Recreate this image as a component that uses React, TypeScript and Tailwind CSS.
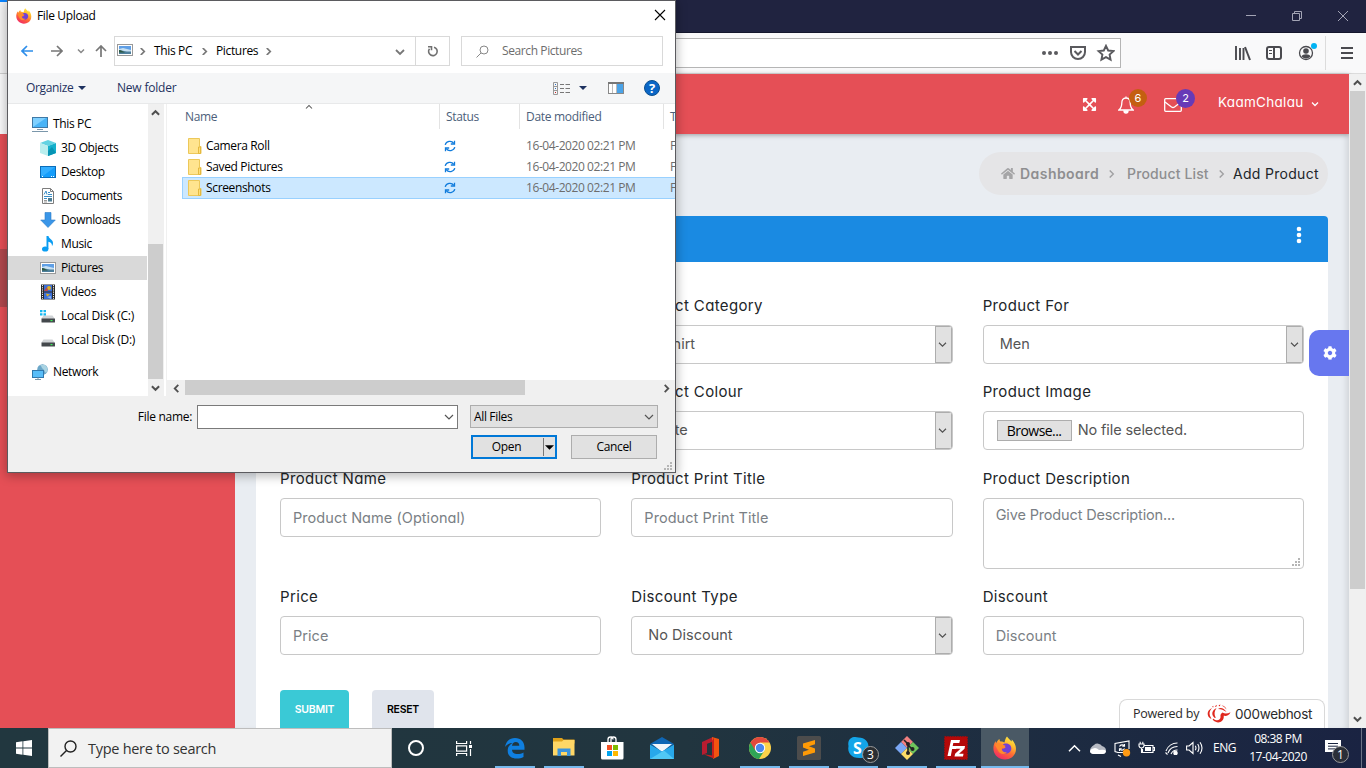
import React from "react";
import { FaHome, FaCog, FaExpandArrowsAlt } from "react-icons/fa";

const SEG = "font-['Open_Sans','Noto_Sans',sans-serif]";

type IconProps = { className?: string };

function Firefox({ className }: IconProps) {
  return (
    <svg viewBox="0 0 24 24" className={className}>
      <defs>
        <linearGradient id="ffx" x1="0.8" y1="0" x2="0.25" y2="1">
          <stop offset="0" stopColor="#fff04a" />
          <stop offset="0.3" stopColor="#ffbd2e" />
          <stop offset="0.6" stopColor="#ff6a34" />
          <stop offset="1" stopColor="#f0246a" />
        </linearGradient>
      </defs>
      <path d="M14 0.5c1 2 3.200 3 4.500 5 .3-.7.300-1.200.2-2 3.500 3.500 5 8 4 12-1.200 5-5.700 8-10.700 8-6 0-10.700-4-11.500-9.500-.4-3.500.300-6 2-9 .1 1 .3 1.500.7 2C4 5.500 5 4 6.500 3c0 1.300.300 2 1 2.500 2 0 3 .5 4 1C12 4 12.500 2 14 .5z" fill="url(#ffx)" />
      <path d="M12 7.500c4-.5 6.500 2 6.300 5.200-.2 3-2.800 5-5.600 4.800-3-.2-5.200-2.400-5-5 2 .6 3.500.2 5-1.200-1.600-.4-2.800-.8-3.500-1.600.7-1 1.500-1.900 2.800-2.200z" fill="#7140d6" />
      <path d="M2 9c2-2 5-2.500 7-.5l3.500 1.200c0 1-1.500 1.700-3.500 2-.8 3 2 5.300 5 4.300-2 3-7.500 2.500-9-1.500z" fill="#ff8a2b" />
    </svg>
  );
}

function Picture({ className = "h-3 w-4" }: IconProps) {
  return (
    <svg viewBox="0 0 16 12" className={className}>
      <rect x="0.5" y="0.5" width="15" height="11" fill="#fff" stroke="#999" />
      <rect x="2" y="2" width="12" height="8" fill="#5f9fe6" />
      <path d="M2 5l4-1 8 2v2H2z" fill="#c7e0f2" />
      <path d="M2 6c3 0 5 2 12 1.500V10H2z" fill="#4d7f9c" />
      <path d="M2 6c2 0 3 1 6 2.500H2z" fill="#2d5942" />
    </svg>
  );
}

function Folder() {
  return (
    <svg viewBox="0 0 14 16" className="h-4 w-3.5 shrink-0">
      <path d="M.5.5h11v8h1.500v7H.5z" fill="#ffe48f" stroke="#ecc85a" />
      <path d="M10.500 9h2v6.500h-2z" fill="#ffdf7a" stroke="#e5b93f" />
    </svg>
  );
}

function Sync() {
  return (
    <svg viewBox="0 0 12 12" className="h-3 w-3" fill="none" stroke="#0f7bdc" strokeWidth="1.3">
      <path d="M1.200 4.800A4.800 4.500 0 0 1 9.800 3.300M10.800 7.200A4.800 4.500 0 0 1 2.200 8.700" />
      <path d="M10.500.7v3.300H6.800M1.500 11.300V8H5.200" />
    </svg>
  );
}

function Chev({ d, className = "h-2 w-2.5", stroke = "#505050", sw = 1.8 }: { d: "up" | "down" | "left" | "right"; className?: string; stroke?: string; sw?: number }) {
  const p = { up: "M1 6l4-4 4 4", down: "M1 2l4 4 4-4", left: "M7 0L3 4l4 4", right: "M3 0l4 4-4 4" }[d];
  return (
    <svg viewBox="0 0 10 8" className={className} fill="none" stroke={stroke} strokeWidth={sw}>
      <path d={p} />
    </svg>
  );
}

function TreeIcon({ name }: { name: string }) {
  const c = "h-4 w-4 shrink-0";
  switch (name) {
    case "This PC":
      return (
        <svg viewBox="0 0 16 16" className={c}>
          <rect x=".5" y="1.500" width="15" height="10" fill="#49b4f7" stroke="#3f79a6" />
          <path d="M1 11L14 2H1z" fill="#7fd0ff" />
          <path d="M5 13.500h6M0 15.500h16" stroke="#7b97ab" />
        </svg>
      );
    case "3D Objects":
      return (
        <svg viewBox="0 0 16 16" className={c}>
          <path d="M0 3l8-3 8 3-8 3z" fill="#63d3e2" />
          <path d="M0 3l8 3v10l-8-3z" fill="#b9eeee" />
          <path d="M16 3L8 6v10l8-3z" fill="#15b0cb" />
          <path d="M8 11l4-4 4 6-8 3z" fill="#0794b4" />
        </svg>
      );
    case "Desktop":
      return (
        <svg viewBox="0 0 16 16" className={c}>
          <rect x=".5" y="2.500" width="15" height="11" fill="#149dfb" stroke="#0b6db9" />
          <path d="M1 3h14L3 12H1z" fill="#33aeff" />
          <path d="M2 12.500h1M11 12.500h1M13 12.500h1" stroke="#fff" />
        </svg>
      );
    case "Documents":
      return (
        <svg viewBox="0 0 16 16" className={c}>
          <path d="M2.500.5h8l3 3v12h-11z" fill="#fff" stroke="#7d7d7d" />
          <path d="M10.500.5v3h3" fill="none" stroke="#7d7d7d" />
          <path d="M4 6.500L6 3l1 3.500M8 4.500h2M8 6.500h4M4 8.500h8M4 10.500h3" stroke="#3a8fc8" fill="none" />
          <path d="M4 12.500h3M4 14h3" stroke="#999" fill="none" />
          <rect x="8" y="10" width="4" height="3.500" fill="#4b7c93" />
        </svg>
      );
    case "Downloads":
      return (
        <svg viewBox="0 0 16 16" className={c}>
          <path d="M5 .5h6V8h4.300L8 15.500.7 8H5z" fill="#3a96e8" stroke="#2c7cc8" strokeWidth=".6" />
        </svg>
      );
    case "Music":
      return (
        <svg viewBox="0 0 16 16" className={c}>
          <ellipse cx="5.200" cy="13" rx="3.200" ry="2.600" fill="#0a9df2" />
          <path d="M6.500 0h2c.2 3 4.500 3.500 4.500 7 0 1.500-.5 2.500-1 3 .2-3-1.500-4-3.600-4.300V13H6.500z" fill="#0a9df2" />
        </svg>
      );
    case "Pictures":
      return <Picture className="h-3 w-4 shrink-0" />;
    case "Videos":
      return (
        <svg viewBox="0 0 16 16" className={c}>
          <rect x="1" y=".5" width="14" height="15" fill="#2a2a2a" />
          <path d="M2.500 1v14M13.500 1v14" stroke="#eee" strokeDasharray="1.200 1" />
          <rect x="4" y="1" width="8" height="6.500" fill="#3c6fd6" />
          <rect x="4" y="8.500" width="8" height="6.500" fill="#3c6fd6" />
          <circle cx="9" cy="4" r="2" fill="#e0b020" />
          <path d="M4 7l3-4 1 4z" fill="#c04a4a" />
          <path d="M6 9.500l4 1-3 2z" fill="#e0b020" />
          <path d="M7 13l4-1v3z" fill="#88b2f0" />
        </svg>
      );
    case "Local Disk (C:)":
    case "Local Disk (D:)":
      return (
        <svg viewBox="0 0 16 16" className={c}>
          <path d="M3.500 7.500h9L15 11H1z" fill="#d0d3d6" />
          {name.includes("C:") && <path d="M0 2h2.500v2.300H0zM3.500 2H6v2.300H3.500zM0 5.300h2.500v2.300H0zM3.500 5.300H6v2.300H3.500z" fill="#14b8f2" />}
          <rect x="1.500" y="10.500" width="13.500" height="4" rx=".5" fill="#44484c" />
          <rect x="10.500" y="12" width="2" height="1.200" fill="#3df05a" />
        </svg>
      );
    default:
      return (
        <svg viewBox="0 0 16 16" className={c}>
          <circle cx="10.500" cy="5.500" r="5.300" fill="#6aa6c8" />
          <path d="M8 1c2 1 1 3 3 4s1 3 3 4c2-2 2-6-1-8z" fill="#a9d3e2" />
          <rect x=".5" y="6.500" width="11" height="7" fill="#58bdf8" stroke="#2f78ad" />
          <path d="M3 15.500h6M6 13.500v2" stroke="#7b97ab" />
        </svg>
      );
  }
}

const tree = ["This PC", "3D Objects", "Desktop", "Documents", "Downloads", "Music", "Pictures", "Videos", "Local Disk (C:)", "Local Disk (D:)"];

function Tree() {
  return (
    <div className="flex w-[140px] flex-col pt-2">
      {tree.map((t, i) => (
        <div
          key={t}
          className={`flex h-6 w-[139px] items-center whitespace-nowrap ${t === "Pictures" ? "bg-[#d9d9d9]" : ""} ${i === 0 ? "gap-[5px] pl-6" : "gap-[5px] pl-8"}`}
        >
          <TreeIcon name={t} />
          <span className={t.startsWith("Local") ? "tracking-[-0.25px]" : ""}>{t}</span>
        </div>
      ))}
      <div className="mt-2 flex h-6 items-center gap-[5px] pl-6">
        <TreeIcon name="Network" />
        <span>Network</span>
      </div>
    </div>
  );
}

function FileRow({ name, selected }: { name: string; selected?: boolean }) {
  return (
    <div className={`ml-[15px] flex items-center border whitespace-nowrap ${selected ? "h-[22px] border-[#99d1ff] bg-[#cce8ff]" : "h-[21px] border-transparent"} border-r-0`}>
      <div className="flex w-[261px] shrink-0 items-center gap-1 pl-[5px]">
        <Folder />
        <span>{name}</span>
      </div>
      <div className="w-[82px] shrink-0">
        <Sync />
      </div>
      <div className="w-[144px] shrink-0 tracking-[-0.42px] text-[#6d6d6d]">16-04-2020 02:21 PM</div>
      <div className="text-[#6d6d6d]">File folder</div>
    </div>
  );
}

function Grip({ className }: IconProps) {
  return (
    <svg viewBox="0 0 8 8" className={className} fill="#b5b5b5">
      <path d="M6 0h2v2H6zM3 3h2v2H3zM6 3h2v2H6zM0 6h2v2H0zM3 6h2v2H3zM6 6h2v2H6z" />
    </svg>
  );
}

function FileDialog() {
  return (
    <div className={`absolute top-0 left-[7px] flex h-[473px] w-[669px] flex-col overflow-hidden border border-[#5b5b5f] bg-white text-[12px] leading-4 tracking-[-0.35px] text-black ${SEG}`}>
      <div className="flex h-[30px] shrink-0 items-center pr-[9px] pl-2">
        <Firefox className="h-4 w-4" />
        <span className="ml-[5px] flex-1">File Upload</span>
        <svg viewBox="0 0 12 12" className="mb-[2px] h-3 w-3" stroke="#000" strokeWidth="1.1">
          <path d="M1 1l10 10M11 1L1 11" />
        </svg>
      </div>
      <div className="flex h-[42px] shrink-0 items-center pb-[2px] pl-[13px]">
        <svg viewBox="0 0 12 12" className="h-3 w-3" fill="none" stroke="#2e8eea" strokeWidth="1.7">
          <path d="M12 6H1M6 1L1 6l5 5" />
        </svg>
        <svg viewBox="0 0 12 12" className="ml-[18px] h-3 w-3" fill="none" stroke="#777" strokeWidth="1.700">
          <path d="M0 6h11M6 1l5 5-5 5" />
        </svg>
        <Chev d="down" className="ml-[14px] h-[6px] w-[8px]" stroke="#888" sw={2} />
        <svg viewBox="0 0 12 12" className="ml-[10px] mr-px h-3 w-3" fill="none" stroke="#777" strokeWidth="1.700">
          <path d="M6 12V1M1 6l5-5 5 5" />
        </svg>
        <div className="ml-[6px] flex h-[30px] w-[336px] items-center border border-[#d9d9d9]">
          <Picture className="mb-[2px] ml-[2px] h-3 w-4" />
          <Chev d="right" className="ml-[5px] h-[7px] w-[9px]" stroke="#777" sw={2} />
          <span className="ml-[7px] w-[40px]">This PC</span>
          <Chev d="right" className="ml-[6px] h-[7px] w-[9px]" stroke="#777" sw={2} />
          <span className="ml-[7px] w-[43px]">Pictures</span>
          <Chev d="right" className="ml-[5px] h-[7px] w-[9px]" stroke="#777" sw={2} />
          <Chev d="down" className="mt-px ml-auto h-2 w-2.5" stroke="#777" />
          <div className="ml-[10px] flex h-full w-[34px] items-center justify-center border-l border-[#d9d9d9]">
            <svg viewBox="0 0 12 12" className="h-3 w-3" fill="none" stroke="#707070" strokeWidth="1.600">
              <path d="M7 2.200a4.300 4.300 0 1 1-4.500 1.500M1 1.800h3.500v3.500" />
            </svg>
          </div>
        </div>
        <div className="ml-[11px] flex h-[30px] w-[202px] items-center border border-[#d9d9d9] text-[#6d6d6d]">
          <svg viewBox="0 0 13 13" className="ml-[14px] h-[13px] w-[13px]" fill="none" stroke="#888">
            <circle cx="8" cy="5" r="4" />
            <path d="M5 8L.5 12.500" />
          </svg>
          <span className="ml-[13px] tracking-[-0.400px]">Search Pictures</span>
        </div>
      </div>
      <div className="flex h-[31px] shrink-0 items-center border-b border-[#e8e9ea] bg-[#f5f6f7] pl-[18px] text-[#1e3260]">
        <span className="w-[52px]">Organize</span>
        <svg viewBox="0 0 8 4" className="h-1 w-2"><path d="M0 0h8L4 4z" fill="#1e3260" /></svg>
        <span className="ml-[31px] tracking-[-0.2px]">New folder</span>
        <svg viewBox="0 0 17 13" className="ml-auto h-[13px] w-[17px]" fill="none" stroke="#777">
          <path d="M.5.5h4v12h-4zM.5 4.500h4M.5 8.500h4" stroke="#999" />
          <path d="M7 2.500h4M12.500 2.500H17M7 6.500h4M12.500 6.500H17M7 10.500h4M12.500 10.500H17" />
          <path d="M2 10.500h1" stroke="#d02020" /><path d="M2 6.500h1M2 2.500h1" stroke="#3070c0" />
        </svg>
        <svg viewBox="0 0 8 4" className="ml-[9px] h-1 w-2"><path d="M0 0h8L4 4z" fill="#1e3260" /></svg>
        <svg viewBox="0 0 16 12" className="ml-[21px] h-3 w-4">
          <rect x=".5" y=".5" width="15" height="11" fill="#fff" stroke="#888" />
          <path d="M0 1h16" stroke="#777" strokeWidth="2" />
          <path d="M4.500 2v9M8.500 2v9" stroke="#bbb" />
          <rect x="9" y="2" width="6" height="9" fill="#4aa3e8" />
        </svg>
        <span className="mr-[15px] ml-5 flex h-4 w-4 items-center justify-center rounded-full border border-[#0a4f8f] bg-[#0a66c6] text-[13px] font-bold text-white">?</span>
      </div>
      <div className="flex h-[292px] shrink-0">
        <Tree />
        <div className="flex w-4 flex-col items-center bg-[#f0f0f0]">
          <Chev d="up" className="mt-[5px] mr-px h-2 w-[9px]" sw={2.2} />
          <div className="mt-[127px] h-[135px] w-[15px] self-start bg-[#cdcdcd]" />
          <Chev d="down" className="mt-[5px] mr-px h-2 w-[9px]" sw={2.2} />
        </div>
        <div className="ml-[2px] flex w-[509px] flex-col border-l border-[#f0f0f0]">
          <div className="relative flex h-[25px] shrink-0 text-[#4c607a] [&>div]:shrink-0 [&>div]:pt-[5px]">
            <Chev d="up" className="absolute top-0 left-[137px] h-[6px] w-[10px]" stroke="#555" sw={1.4} />
            <div className="w-[273px] border-r border-[#e3e3e3] pl-[18px]">Name</div>
            <div className="w-[80px] border-r border-[#e3e3e3] pl-[6px]">Status</div>
            <div className="w-[144px] border-r border-[#e3e3e3] pl-[6px] tracking-[-0.3px]">Date modified</div>
            <div className="pl-[6px]">Type</div>
          </div>
          <div className="mt-[6px] w-[508px] overflow-hidden">
            <FileRow name="Camera Roll" />
            <FileRow name="Saved Pictures" />
            <FileRow name="Screenshots" selected />
          </div>
          <div className="mt-auto flex h-4 items-center bg-[#f0f0f0]">
            <Chev d="left" className="ml-[5px] h-[9px] w-[9px]" sw={2} />
            <div className="ml-[4px] h-[15px] w-[340px] self-start bg-[#cdcdcd]" />
            <Chev d="right" className="ml-auto mr-[4px] h-[9px] w-[9px]" sw={2} />
          </div>
        </div>
      </div>
      <div className="relative flex flex-1 flex-col bg-[#f0f0f0] pt-[10px]">
        <div className="flex items-start">
          <span className="w-[184px] pt-[3px] text-right tracking-[-0.3px]">File name:</span>
          <div className="-mt-px ml-[5px] flex h-[24px] w-[261px] items-center justify-end border border-[#7a7a7a] bg-white pr-[3px]">
            <Chev d="down" stroke="#555" sw={1.2} />
          </div>
          <div className="-mt-px ml-[12px] flex h-[23px] w-[188px] items-center justify-between border border-[#adadad] bg-[#e1e1e1] pr-[3px] pl-[3px]">
            <span className="pt-px">All Files</span>
            <Chev d="down" stroke="#555" sw={1.2} />
          </div>
        </div>
        <div className="mt-[6px] flex pl-[463px]">
          <div className="flex h-6 w-[86px] items-center border-2 border-[#0078d7] bg-[#e1e1e1]">
            <span className="w-[70px] pr-[3px] text-center">Open</span>
            <span className="h-[18px] w-px bg-[#777]" />
            <svg viewBox="0 0 8 4" className="ml-px h-[5px] w-[9px]"><path d="M0 0h8L4 4z" /></svg>
          </div>
          <div className="ml-[14px] h-6 w-[86px] border border-[#adadad] bg-[#e1e1e1] pt-[3px] text-center">Cancel</div>
        </div>
        <Grip className="absolute right-[3px] bottom-[2px] h-2 w-2" />
      </div>
    </div>
  );
}

function Label({ children }: { children: React.ReactNode }) {
  return <div className="mb-[7px] h-[25px] pt-px text-[15px] leading-6 tracking-[0.35px] whitespace-nowrap text-[#212529]">{children}</div>;
}

function Input({ label, text }: { label: string; text: string }) {
  return (
    <div>
      <Label>{label}</Label>
      <div className="flex h-[39px] items-center rounded border border-[#c8c8c8] pl-3 text-[14.5px] tracking-[0.05px] text-[#7a7f85]">{text}</div>
    </div>
  );
}

function Select({ label, text }: { label: string; text: string }) {
  return (
    <div>
      <Label>{label}</Label>
      <div className="flex h-[39px] items-center justify-between overflow-hidden rounded border border-[#c8c8c8] pl-4 text-[14.5px] text-[#555]">
        <span className="pb-px">{text}</span>
        <span className="flex h-[37px] w-[17px] items-center justify-center border border-[#adadad] bg-[#e1e1e1]">
          <Chev d="down" sw={1.3} className="mr-px h-[7px] w-[9px]" />
        </span>
      </div>
    </div>
  );
}

function BrowserChrome() {
  return (
    <>
      <div className="flex h-[33px] shrink-0 items-center justify-end border-b border-[#14162c] bg-[#202340] pr-[18px]">
        <svg viewBox="0 0 102 10" className="h-[10px] w-[102px]" fill="none" stroke="#a3a4b5">
          <path d="M0 4.500h10M46.500 2.500h7v7h-7zM48.500 2.500v-2h7v7h-2M92 0l10 10M102 0L92 10" />
        </svg>
      </div>
      <div className="flex h-[41px] shrink-0 items-center border-b border-[#dcdcdc] bg-[#f9f9fa]">
        <div className="-ml-1 flex h-[30px] w-[1125px] items-center justify-end border border-[#b5b5b5] bg-white pr-[5px]">
          <svg viewBox="0 0 74 18" className="h-[18px] w-[74px]" fill="none" stroke="#5a5a5e" strokeWidth="2">
            <g fill="#5a5a5e" stroke="none"><circle cx="3" cy="9" r="2" /><circle cx="9" cy="9" r="2" /><circle cx="15" cy="9" r="2" /></g>
            <path d="M30 3h14v5a7 7 0 0 1-14 0zM33.500 7l3.500 3.500L40.500 7" />
            <path d="M65 1.800l2.200 4.700 5.200.6-3.800 3.500 1 5.100-4.600-2.500-4.600 2.500 1-5.100-3.800-3.500 5.200-.6z" strokeWidth="1.900" />
          </svg>
        </div>
        <svg viewBox="0 0 124 34" className="ml-auto mr-[10px] h-[34px] w-[124px]" fill="none" stroke="#4a4a4f" strokeWidth="2">
          <path d="M4 10v14M8 12v12M11.500 12v12" strokeWidth="1.900" /><path d="M13 11l5 13" />
          <rect x="35" y="11" width="14" height="12" rx="2" /><path d="M42 11v12" /><path d="M37 14.500h3M37 17.500h3" strokeWidth="1" />
          <circle cx="74" cy="17" r="6.500" strokeWidth="1.300" />
          <circle cx="74" cy="15" r="2.800" fill="#4a4a4f" stroke="none" /><path d="M69.500 20.500c1-3 8-3 9 0-2.500 2.500-6.500 2.500-9 0z" fill="#4a4a4f" stroke="none" />
          <circle cx="82" cy="10" r="3" fill="#00b3f4" stroke="none" />
          <path d="M93.500 0v34" stroke="#dcdcdc" strokeWidth="1" />
          <path d="M109 12h12M109 17h12M109 22h12" />
        </svg>
      </div>
    </>
  );
}

function Page() {
  return (
    <div className="relative flex h-[654px] shrink-0 font-[Inter,sans-serif] [font-feature-settings:'cv11']">
      <div className="flex w-[235px] shrink-0 flex-col bg-[#e54f56]">
        <div className="h-[60px] bg-[#f4f4f6]" />
        <div className="mt-[115px] h-[58px] bg-[#b1484e]" />
      </div>
      <div className="flex w-[1114px] flex-col bg-[#e9edf2] shadow-[inset_-5px_0_6px_-3px_rgba(0,0,0,0.12)]">
        <div className="flex h-[60px] shrink-0 items-center justify-end bg-[#e54f56] pr-[30px] shadow-[0_1px_5px_rgba(0,0,0,0.35)]">
          <FaExpandArrowsAlt className="h-[15px] w-[15px] text-white" />
          <div className="relative ml-[21px] h-[18px] w-4">
            <svg viewBox="0 0 16 18" className="mt-[1px] h-[18px] w-4" fill="none" stroke="#fff" strokeWidth="1.300">
              <path d="M8 2c3 0 4.200 2 4.200 5 0 3.500 1 5.500 3 7H.8c2-1.500 3-3.500 3-7 0-3 1.200-5 4.200-5zM8 .5V2" />
              <path d="M6 15a2 2 0 0 0 4 0z" fill="#fff" />
            </svg>
            <span className="absolute -top-[6px] left-[11px] flex h-[18px] w-[18px] items-center justify-center rounded-full bg-[#c45f10] text-[11px] text-white">6</span>
          </div>
          <div className="relative ml-[30px] h-[14px] w-[18px]">
            <svg viewBox="0 0 18 14" className="mt-[1px] h-[14px] w-[18px]" fill="none" stroke="#fff" strokeWidth="1.300">
              <rect x=".7" y=".7" width="16.600" height="12.600" rx="1" />
              <path d="M1 4l6.500 5q1.500 1 3 0L17 4" />
            </svg>
            <span className="absolute -top-[8px] left-[12px] flex h-[19px] w-[19px] items-center justify-center rounded-full bg-[#673ab7] text-[11px] text-white">2</span>
          </div>
          <span className="ml-[36px] w-[86px] pb-[3px] text-[13.5px] tracking-[0.3px] whitespace-nowrap text-white">KaamChalau</span>
          <Chev d="down" className="ml-[7px] h-[6px] w-[8px]" stroke="#fff" sw={1.700} />
        </div>
        <div className="mt-[18px] mr-[21px] flex h-[43px] w-[349px] shrink-0 items-center self-end rounded-full bg-[#e5e5e7] pl-[22px] text-[14px] font-medium whitespace-nowrap text-[#8e8e90]">
          <FaHome className="h-[13px] w-[14px] text-[#a5a5a7]" />
          <span className="ml-[5px] w-[79px] font-semibold tracking-[0.45px]">Dashboard</span>
          <Chev d="right" className="ml-[8px] h-2 w-[9px]" stroke="#a0a0a2" sw={1.500} />
          <span className="ml-[11px] w-[82px] tracking-[0.15px]">Product List</span>
          <Chev d="right" className="ml-[8px] h-2 w-[9px]" stroke="#a0a0a2" sw={1.500} />
          <span className="ml-[7px] font-normal tracking-[0.3px] text-[#212529]">Add Product</span>
        </div>
        <div className="mt-[21px] ml-[21px] flex w-[1072px] flex-1 flex-col rounded-t-sm bg-white">
          <div className="flex h-[46px] items-center justify-end rounded-t-sm bg-[#1a8ae2] pr-[26px]">
            <svg viewBox="0 0 6 18" className="mb-2 h-[18px] w-[6px]" fill="#fff">
              <circle cx="3" cy="3" r="2.300" /><circle cx="3" cy="9" r="2.300" /><circle cx="3" cy="15" r="2.300" />
            </svg>
          </div>
          <div className="grid grid-cols-3 gap-x-[30px] gap-y-[15px] px-6 pt-[31px]">
            <Select label="Product Brand" text="Brand" />
            <Select label="Product Category" text="T-Shirt" />
            <Select label="Product For" text="Men" />
            <Select label="Product Size" text="Size" />
            <Select label="Product Colour" text="White" />
            <div className="pb-px">
              <Label>Product Image</Label>
              <div className="flex h-[39px] items-center rounded border border-[#c8c8c8] pb-px pl-[13px] text-[14.500px] tracking-[-0.1px] text-[#555]">
                <span className={`mr-[6px] flex h-[21px] w-[75px] items-center justify-center border border-[#adadad] bg-[#e1e1e1] text-[14px] tracking-[-0.55px] text-black ${SEG}`}>Browse...</span>
                No file selected.
              </div>
            </div>
            <Input label="Product Name" text="Product Name (Optional)" />
            <Input label="Product Print Title" text="Product Print Title" />
            <div>
              <Label>Product Description</Label>
              <div className="relative h-[71px] rounded border border-[#c8c8c8] pt-[5px] pl-3 text-[14.500px] tracking-[-0.15px] text-[#7a7f85]">
                Give Product Description...
                <Grip className="absolute right-[3px] bottom-[2px] h-2 w-2" />
              </div>
            </div>
            <Input label="Price" text="Price" />
            <Select label="Discount Type" text="No Discount" />
            <Input label="Discount" text="Discount" />
          </div>
          <div className="mt-[35px] flex h-[38px] gap-[23px] pl-6 text-[10.5px] font-semibold tracking-[-0.25px]">
            <div className="flex w-[69px] items-center justify-center rounded-t-sm bg-[#3ac9d6] pt-px text-white">SUBMIT</div>
            <div className="flex w-[62px] items-center justify-center rounded-t-sm bg-[#e0e4ec] pt-px text-black">RESET</div>
          </div>
        </div>
      </div>
      <div className="flex w-[17px] flex-col items-center bg-[#f0f0f0]">
        <Chev d="up" className="mt-[5px] mr-px h-2 w-[9px]" sw={2.200} />
        <div className="mt-[4px] h-[498px] w-[15px] bg-[#cdcdcd]" />
        <Chev d="down" className="mt-auto mr-px mb-[5px] h-2 w-[9px]" sw={2.200} />
      </div>
      <div className="absolute top-[256px] left-[1309px] flex h-[46px] w-10 items-center justify-center rounded-l-[10px] bg-[#6777ef]">
        <FaCog className="ml-px h-[14px] w-[14px] text-white" />
      </div>
      <div className={`absolute bottom-0 left-[1119px] flex h-[29px] w-[206px] items-center rounded-t-lg border border-b-0 border-[#d9d9d9] bg-white pl-[13px] text-[12.5px] text-[#2b2b2b] ${SEG}`}>
        <span className="w-[67px] tracking-[-0.25px] whitespace-nowrap">Powered by</span>
        <svg viewBox="0 0 24 20" className="ml-[7px] h-5 w-6" fill="#e0281e">
          <path d="M5 4C-.5 6.500-.5 12 3.500 14.500c.8.400 1.100.1.600-.5C1.800 10.500 2 7.500 5 4z" />
          <path d="M9.500 4c-4.700 2.500-5.500 6.500-2 9.700.8.600 1.400.2 1-.5C7 10 7.200 7.300 9.500 4z" />
          <path d="M6.500 14.800c3.500 3 7.500 1.200 7-2.300-.2-2 .5-3 2-4 2 1.500 5 1.500 8-.3-1.300 3-3.800 4.200-6.800 3.600.8 5.700-5.500 9-10.500 4.500-.8-1 -.5-2 .3-1.500z" />
          <path d="M11 5c3-2 6-.5 8.500 3-3-2-5-2.800-8.500-3zM14.500 1.500c2.500 0 4.500 1.800 5 4-1.500-2-3-3.200-5-4z" />
          <path d="M7.800 2.300l2.300-1.500-1 2.100zM11.500 1.300l2-.9-.8 2zM5 2.800l1.500-1-.3 1.600z" />
        </svg>
        <span className="ml-1 font-[Inter,sans-serif] text-[13.5px] tracking-[-0.3px]">000webhost</span>
      </div>
    </div>
  );
}

const appIcons: { name: string; slot: string; bar: string; el: React.ReactNode }[] = [
  {
    name: "edge", slot: "w-[54px]", bar: "w-10",
    el: (
      <svg viewBox="0 0 24 24" className="h-6 w-6">
        <path d="M2 11C3 5.500 6.500 2 12 2c6 0 9.500 4 9.500 9.500v2.300H9c.2 3 2.500 4.200 5.500 4.200 2.300 0 4.300-.6 6-1.600v4.600c-1.900 1.100-4.200 1.600-7 1.600-5.500 0-8.800-3.200-8.800-7.800 0-3.700 1.800-6.300 5-7.800C6.500 7.200 4 8 2 11zm7-1.300h7.300C16.300 7.200 15 6 12.800 6 10.700 6 9.300 7.400 9 9.700z" fill="#0f7fe0" />
      </svg>
    ),
  },
  {
    name: "explorer", slot: "w-[44px]", bar: "w-10",
    el: (
      <svg viewBox="0 0 24 24" className="h-6 w-6">
        <path d="M1 2h9l1.500 1.500H22.500v4H1z" fill="#e0a21a" />
        <path d="M1 5.500h9L11.500 4h11V19.500H1z" fill="#ffd766" />
        <path d="M5.500 12.500H18.500v7.500h-3.500v-4H9v4H5.500z" fill="#3b93dc" />
      </svg>
    ),
  },
  {
    name: "store", slot: "w-[52px]", bar: "",
    el: (
      <svg viewBox="0 0 24 24" className="h-6 w-6">
        <path d="M8 7V3.500a2.500 2.500 0 0 1 5 0M11 7V3.500a2.500 2.500 0 0 1 5 0V7" fill="none" stroke="#fff" strokeWidth="1.300" />
        <path d="M1 6h22.500v16a1.500 1.500 0 0 1-1.500 1.500H2.500A1.500 1.500 0 0 1 1 22z" fill="#fff" />
        <path d="M7 9h5v5H7z" fill="#f25022" /><path d="M13 9h5v5h-5z" fill="#7fba00" />
        <path d="M7 15h5v5H7z" fill="#00a4ef" /><path d="M13 15h5v5h-5z" fill="#ffb900" />
      </svg>
    ),
  },
  {
    name: "mail", slot: "w-[47px]", bar: "",
    el: (
      <svg viewBox="0 0 24 24" className="h-6 w-6">
        <path d="M0 8l12-7 12 7-12 8z" fill="#0f66b4" />
        <path d="M2 8h20l-10 8z" fill="#f2f6fa" />
        <path d="M0 8.500l12 7 12-7V23H0z" fill="#28a8ea" />
        <path d="M0 23l14-8.500L24 23z" fill="#50c8f5" />
      </svg>
    ),
  },
  {
    name: "office", slot: "w-[52px]", bar: "",
    el: (
      <svg viewBox="0 0 24 24" className="h-6 w-6">
        <path d="M3 6l11-5v5L8 8v9l-5 2z" fill="#b81c30" />
        <path d="M13 1l7 2v17l-6 3z" fill="#f25410" />
        <path d="M4 18l9 1.500V5l2-3.500v21z" fill="#c81e1e" /><path d="M8 8l5-2v12H8z" fill="#22363f" />
      </svg>
    ),
  },
  {
    name: "chrome", slot: "w-[46px]", bar: "w-10",
    el: (
      <svg viewBox="0 0 24 24" className="h-6 w-6">
        <circle cx="12" cy="12" r="11" fill="#fcd24a" />
        <path d="M2.500 6.500A11 11 0 0 0 11 23l5.500-8.500L12 12z" fill="#2fa457" />
        <path d="M2.500 6.500a11 11 0 0 1 19 0H12L7 14z" fill="#e2483d" />
        <circle cx="12" cy="12" r="5.200" fill="#fff" /><circle cx="12" cy="12" r="4.200" fill="#4a86ee" />
      </svg>
    ),
  },
  {
    name: "sublime", slot: "w-[52px]", bar: "w-10",
    el: (
      <svg viewBox="0 0 24 24" className="h-6 w-6">
        <rect width="24" height="24" rx="1.500" fill="#4c4c4c" />
        <path d="M18 4v4.300l-6 2 6 2.200v4L6 20v-4.300l6-2-6-2.200v-4z" fill="#ff9a06" />
      </svg>
    ),
  },
  {
    name: "skype", slot: "w-[46px]", bar: "w-10",
    el: (
      <span className="relative ml-1.5 h-6 w-6">
        <svg viewBox="0 0 24 24" className="-ml-0.5 h-6 w-6">
          <path d="M7 1c2-.3 3 .2 4.500.5C18 1.500 22 6 21.500 12c1.500 5-1.500 10-7 10C5 23 0 17 1.500 10 .5 5 3 1.500 7 1z" fill="#14a5e8" />
        </svg>
        <span className="absolute top-0.5 left-[4px] text-[16px] leading-5 font-bold text-white">S</span>
        <span className="absolute top-[10px] left-[13px] flex h-[17px] w-[17px] items-center justify-center rounded-full border border-[#9a9a9a] bg-[#2b2f33] text-[12px] text-white">3</span>
      </span>
    ),
  },
  {
    name: "git", slot: "w-[52px]", bar: "w-10",
    el: (
      <svg viewBox="0 0 24 24" className="h-6 w-6">
        <path d="M12 0l6 6-6 6-6-6z" fill="#f28080" /><path d="M18 6l6 6-6 6-6-6z" fill="#6fc45c" />
        <path d="M6 6l6 6-6 6-6-6z" fill="#7aa7f5" /><path d="M12 12l6 6-6 6-6-6z" fill="#fbdc68" />
        <path d="M9 4l4 4v10M13 9l4 4" stroke="#222" strokeWidth="1.600" fill="none" />
        <circle cx="13" cy="8" r="2" fill="#222" /><circle cx="13" cy="17" r="2" fill="#222" /><circle cx="17.500" cy="13" r="2" fill="#222" />
      </svg>
    ),
  },
  {
    name: "filezilla", slot: "w-[46px]", bar: "w-10",
    el: (
      <svg viewBox="0 0 24 24" className="h-6 w-6">
        <rect x=".7" y=".7" width="22.600" height="22.600" fill="#b40909" stroke="#b40909" strokeDasharray="1.500 1" />
        <path d="M7 4h9l-.7 3h-6l-.6 3h4l-.6 3h-4L6.800 20H3.500zM12 10h9l-.5 2.700-5.500 5h4.500L19 20.500h-8.500l.6-2.800 5.400-5h-5z" fill="#fff" />
      </svg>
    ),
  },
];

function Taskbar() {
  return (
    <div className={`flex h-10 shrink-0 bg-linear-to-r from-[#21373f] via-[#21353f] to-[#1a2342] text-white ${SEG}`}>
      <div className="flex w-12 items-center justify-center">
        <svg viewBox="0 0 16 16" className="h-4 w-4" fill="#fff">
          <path d="M0 2.300l6.500-1v6.300H0zM7.300 1.200L16 0v7.600H7.300zM0 8.400h6.500v6.300l-6.500-1zM7.300 8.400H16V16l-8.700-1.200z" />
        </svg>
      </div>
      <div className="flex w-[344px] items-center border border-[#bdbdbd] bg-[#f2f2f2]">
        <svg viewBox="0 0 17 17" className="ml-[11px] h-[17px] w-[17px]" fill="none" stroke="#222" strokeWidth="1.400">
          <circle cx="10.500" cy="6.500" r="5.500" /><path d="M6.500 10.500L.5 16.500" />
        </svg>
        <span className="ml-[11px] pt-[2px] text-[14.500px] tracking-[-0.28px] text-[#333]">Type here to search</span>
      </div>
      <div className="flex w-12 items-center justify-center">
        <span className="mr-px h-[16px] w-[16px] rounded-full border-[2.5px] border-white" />
      </div>
      <div className="flex w-12 items-center justify-center">
        <svg viewBox="0 0 16 15" className="h-[15px] w-4" fill="none" stroke="#fff" strokeWidth="1.200">
          <path d="M.6 0v2.500h10V0M.6 15v-2.500h10V15M.6 4.800h10v5.400H.6zM14.500 0v3M14.500 8v7" /><path d="M13 4h3v3h-3z" fill="#fff" stroke="none" />
        </svg>
      </div>
      {appIcons.map((a) => (
        <div key={a.name} className={`flex h-10 shrink-0 flex-col items-center justify-between pt-[8px] ${a.slot}`}>
          {a.el}
          {a.bar && <span className={`h-[2px] bg-[#76b9ed] ${a.bar}`} />}
        </div>
      ))}
      <div className="ml-[2px] flex w-12 shrink-0 flex-col items-center justify-between bg-[#4a5965] pt-[8px]">
        <Firefox className="h-6 w-6" />
        <span className="h-[2px] w-full bg-[#76b9ed]" />
      </div>
      <div className="ml-auto flex items-center">
        <Chev d="up" className="mr-[-1px] h-[11px] w-[15px]" stroke="#fff" sw={1.100} />
        <svg viewBox="0 0 16 11" className="ml-[9px] h-[11px] w-4"><path d="M4 2a5 4.500 0 0 1 8 1q4 1 4 4.500T12.500 11H3.500Q0 10.500 0 7.500T4 2z" fill="#b5b9c2" /><path d="M3 5.500q3-1.500 6 1.500 6-1 7 1-.5 3-3.500 3H3.500Q0 10.500 0 8q1-2.500 3-2.500z" fill="#fff" /></svg>
        <svg viewBox="0 0 17 17" className="ml-2 h-[17px] w-[17px]" fill="none" stroke="#fff" strokeWidth="1.100">
          <path d="M10 12.500H4l-3-1v-8l14-2.500v8M4 15l3 1.500" /><path d="M5.500 6.500a3 3 0 0 1 5-.5M10.500 8.500a3 3 0 0 1-5 .5M10.500 4v2.200H8.300M5.500 11V8.800h2.200" />
          <circle cx="12.500" cy="12.800" r="3.700" fill="#ff9a14" stroke="none" />
        </svg>
        <svg viewBox="0 0 17 14" className="ml-[7px] h-[14px] w-[17px]" fill="none" stroke="#fff" strokeWidth="1.100">
          <path d="M6 4.500h9v7H4.500V8M15.500 6.500h1v3h-1" /><path d="M7 6h6v4H7z" fill="#fff" stroke="none" /><path d="M1 3h5v2q-.5 2-2.500 2T1 5zM2.200 3V.8M4.800 3V.8M3.500 7v4.500h1" />
        </svg>
        <svg viewBox="0 0 13 13" className="ml-[10px] h-[13px] w-[13px]" fill="none" stroke="#fff" strokeWidth="1.100">
          <path d="M1 9A12 12 0 0 1 12.500 1M3 11a10 10 0 0 1 9.500-6.500M6 12a7 7 0 0 1 6.500-4" /><circle cx="10.500" cy="11" r="1.700" fill="#fff" />
          <path d="M.5 10.500l2 2" />
        </svg>
        <svg viewBox="0 0 17 14" className="ml-[8px] h-[14px] w-[17px]" fill="none" stroke="#fff" strokeWidth="1.100">
          <path d="M.6 5h2.500L7 1.500v11L3.100 9H.6zM9.300 4.800q1.300 2.200 0 4.400M11.700 3q2.500 4 0 8M14 1.200q4 5.800 0 11.600" />
        </svg>
        <span className="ml-[10px] w-[23px] text-[12px] tracking-[-0.5px]">ENG</span>
        <div className="ml-[13px] flex w-[58px] flex-col items-center text-[12px] leading-[18px] tracking-[-0.5px] whitespace-nowrap">
          <span>08:38 PM</span>
          <span>17-04-2020</span>
        </div>
        <div className="relative ml-[18px] h-6 w-6">
          <svg viewBox="0 0 16 16" className="mt-1 h-4 w-4"><path d="M0 0h16v12h-3l-3 3v-3H0z" fill="#fff" /><path d="M3 3.500h10M3 6.200h10M3 8.900h7" stroke="#1b2540" /></svg>
          <span className="absolute top-[10px] left-[7px] flex h-[17px] w-[17px] items-center justify-center rounded-full border border-[#9a9a9a] bg-[#2b2f38] text-[12px] text-white">1</span>
        </div>
        <div className="ml-[12px] h-10 w-[5px] border-l border-[#6a7285]" />
      </div>
    </div>
  );
}

export default function App() {
  return (
    <div className="relative flex h-[768px] w-[1366px] flex-col overflow-hidden bg-white">
      <BrowserChrome />
      <Page />
      <Taskbar />
      <div className="absolute top-0 left-0 flex h-[134px] w-[7px] flex-col">
        <div className="h-[2px] bg-[#0a84ff]" />
        <div className="h-[72px] border-b border-[#cfcfcf] bg-[#f4f4f5]" />
        <div className="flex-1 bg-[#fafafb]" />
      </div>
      <div className="absolute top-0 left-[7px] h-[473px] w-[669px] shadow-[0_2px_10px_1px_rgba(0,0,0,0.28)]" />
      <FileDialog />
    </div>
  );
}
